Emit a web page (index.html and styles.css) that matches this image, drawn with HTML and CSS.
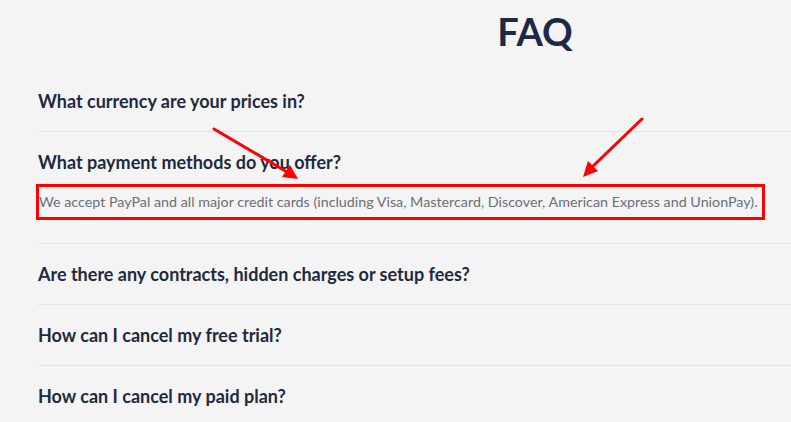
FILE: index.html
```html
<!DOCTYPE html>
<html lang="en">
<head>
<meta charset="utf-8">
<title>FAQ</title>
<link rel="stylesheet" href="styles.css">
</head>
<body>
<main class="faq">
  <h1 class="faq-title">FAQ</h1>
  <div class="faq-item">
    <h3 class="faq-q">What currency are your prices in?</h3>
  </div>
  <div class="faq-item">
    <h3 class="faq-q">What payment methods do you offer?</h3>
    <p class="faq-a">We accept PayPal and all major credit cards (including Visa, Mastercard, Discover, American Express and UnionPay).</p>
  </div>
  <div class="faq-item">
    <h3 class="faq-q">Are there any contracts, hidden charges or setup fees?</h3>
  </div>
  <div class="faq-item">
    <h3 class="faq-q">How can I cancel my free trial?</h3>
  </div>
  <div class="faq-item">
    <h3 class="faq-q">How can I cancel my paid plan?</h3>
  </div>
</main>
<svg class="annot" width="791" height="422" viewBox="0 0 791 422" aria-hidden="true">
  <line x1="214" y1="129" x2="287" y2="172" stroke="#ff0000" stroke-width="3" stroke-linecap="round"/>
  <polygon points="298,179 282,177 290,165" fill="#ff0000"/>
  <line x1="642" y1="119" x2="591" y2="168" stroke="#ff0000" stroke-width="3" stroke-linecap="round"/>
  <polygon points="583,177 588,161 598,171" fill="#ff0000"/>
</svg>
</body>
</html>
```
FILE: styles.css
```css
html, body {
  margin: 0;
  padding: 0;
}
body {
  background: #f4f4f4;
  font-family: "Lato", "Liberation Sans", sans-serif;
  overflow: hidden;
  position: relative;
  width: 791px;
  height: 422px;
}
.faq {
  margin-left: 38px;
  width: 994px;
}
.faq-title {
  margin: 8px 0 17px;
  font-size: 38px;
  line-height: 46px;
  font-weight: 700;
  color: #1e2a45;
  text-align: center;
}
.faq-item {
  border-bottom: 1px solid #e3e3e3;
  padding: 18px 0;
}
.faq-q {
  margin: 0;
  font-size: 18px;
  line-height: 24px;
  font-weight: 700;
  color: #1f2940;
}
.faq-a {
  margin: 10px 0 5px -2px;
  width: 723px;
  border: 3px solid #ff0000;
  padding: 5px 0 5px 0;
  font-size: 14.3px;
  line-height: 20px;
  color: #6c6f77;
}
.annot {
  position: absolute;
  left: 0;
  top: 0;
  pointer-events: none;
}
```
